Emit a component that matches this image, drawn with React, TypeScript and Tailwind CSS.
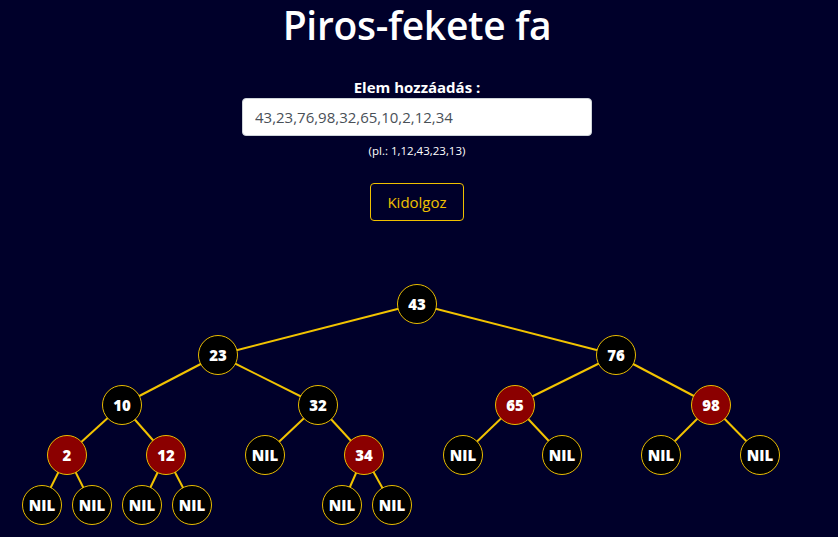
import React from "react";

type TNode = { id: string; label: string; x: number; y: number; red?: boolean; parent?: string };

// page coordinates of node centres; tree box starts at TOP
const TOP = 221;

const NODES: TNode[] = [
  { id: "43", label: "43", x: 417, y: 304 },
  { id: "23", label: "23", x: 218, y: 355, parent: "43" },
  { id: "76", label: "76", x: 616, y: 355, parent: "43" },
  { id: "10", label: "10", x: 122, y: 405, parent: "23" },
  { id: "32", label: "32", x: 318, y: 405, parent: "23" },
  { id: "65", label: "65", x: 515, y: 405, red: true, parent: "76" },
  { id: "98", label: "98", x: 711, y: 405, red: true, parent: "76" },
  { id: "2", label: "2", x: 67, y: 455, red: true, parent: "10" },
  { id: "12", label: "12", x: 166, y: 455, red: true, parent: "10" },
  { id: "n32l", label: "NIL", x: 265, y: 455, parent: "32" },
  { id: "34", label: "34", x: 364, y: 455, red: true, parent: "32" },
  { id: "n65l", label: "NIL", x: 463, y: 455, parent: "65" },
  { id: "n65r", label: "NIL", x: 562, y: 455, parent: "65" },
  { id: "n98l", label: "NIL", x: 661, y: 455, parent: "98" },
  { id: "n98r", label: "NIL", x: 760, y: 455, parent: "98" },
  { id: "n2l", label: "NIL", x: 42, y: 505, parent: "2" },
  { id: "n2r", label: "NIL", x: 92, y: 505, parent: "2" },
  { id: "n12l", label: "NIL", x: 142, y: 505, parent: "12" },
  { id: "n12r", label: "NIL", x: 192, y: 505, parent: "12" },
  { id: "n34l", label: "NIL", x: 342, y: 505, parent: "34" },
  { id: "n34r", label: "NIL", x: 392, y: 505, parent: "34" },
];

const byId = Object.fromEntries(NODES.map((n) => [n.id, n]));

export default function App() {
  return (
    <div
      className="min-h-[537px] w-full bg-[#00002a] text-white flex flex-col overflow-hidden"
      style={{ fontFamily: '"Open Sans", "Noto Sans", sans-serif' }}
    >
      <div className="w-[834px] flex flex-col items-center">
        <h1 className="pt-[2px] text-[39px] font-semibold leading-[46px] tracking-[-0.3px]">Piros-fekete fa</h1>

        <label className="mt-[29px] text-[15px] font-bold leading-[21px]">Elem hozzáadás :</label>
        <input
          defaultValue="43,23,76,98,32,65,10,2,12,34"
          className="w-[350px] h-[38px] rounded-[4px] border border-[#ced4da] bg-white px-3 text-[15px] text-[#495057] outline-none"
        />
        <p className="mt-[6px] text-[11.5px] leading-[18px]">(pl.: 1,12,43,23,13)</p>

        <button className="mt-[23px] h-[38px] px-4 rounded-[4px] border border-[#f0c000] text-[15px] text-[#f0c000]">
          Kidolgoz
        </button>
      </div>

      {/* tree canvas */}
      <div className="relative w-[838px] h-[316px] shrink-0">
        <svg className="absolute inset-0" width={838} height={316}>
          {NODES.filter((n) => n.parent).map((n) => {
            const p = byId[n.parent!];
            return (
              <line
                key={n.id}
                x1={p.x}
                y1={p.y - TOP}
                x2={n.x}
                y2={n.y - TOP}
                stroke="#f2c300"
                strokeWidth={2}
              />
            );
          })}
        </svg>
        {NODES.map((n) => (
          <div
            key={n.id}
            className={`absolute w-[40px] h-[40px] -ml-[20px] -mt-[20px] rounded-full border border-[#e8bc00] flex items-center justify-center text-[15px] font-extrabold ${
              n.red ? "bg-[#8b0000]" : "bg-black"
            }`}
            style={{ left: n.x, top: n.y - TOP }}
          >
            {n.label}
          </div>
        ))}
      </div>
    </div>
  );
}
